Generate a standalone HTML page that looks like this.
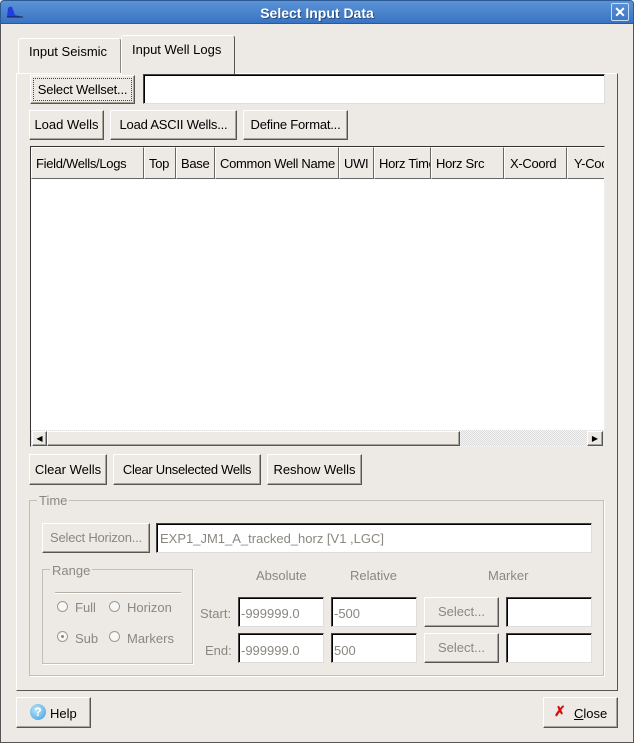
<!DOCTYPE html>
<html><head><meta charset="utf-8"><style>
*{box-sizing:border-box;margin:0;padding:0}
body{width:634px;height:743px;overflow:hidden;background:#edeae5;font-family:"Liberation Sans",sans-serif;font-size:13px;color:#000;position:relative}
.a{position:absolute}
.title{left:0;top:0;width:634px;height:24px;background:linear-gradient(#5a93d6,#3a74c2);border:1px solid #2d5a95;border-radius:4px 4px 0 0;color:#fff;font-weight:bold;font-size:14px;text-align:center;line-height:24px;text-shadow:1px 1px 0 #244d85}
.frame{left:0;top:24px;width:634px;height:719px;border:1px solid #555;border-top:none}
.btn{position:absolute;background:#edeae5;border:1px solid;border-color:#fff #555 #555 #fff;box-shadow:inset -1px -1px 0 #a9a49b;text-align:center;white-space:nowrap}
.inp{position:absolute;background:#fff;border:1px solid;border-color:#444 #ddd #ddd #444;box-shadow:inset 1px 1px 0 #000;white-space:nowrap;overflow:hidden}
.g{color:#8a8780}
.th{position:absolute;top:0;height:32px;line-height:32px;padding-left:4px;border:1px solid;border-color:#fff #666 #666 #fff;background:#edeae5;overflow:hidden;white-space:nowrap;letter-spacing:-0.3px}
.rad{position:absolute;width:11px;height:11px;border-radius:50%;border:1px solid #999;background:#f7f7f5}
.grp{position:absolute;border:1px solid #c3bfb7;box-shadow:1px 1px 0 #fff}
</style></head><body>
<div class="a title">Select Input Data</div>
<svg class="a" style="left:6px;top:5px" width="18" height="14"><path d="M1 12 L2 3 Q4 1 6 2 L9 10 L17 12 Z" fill="#1f3fe0"/><path d="M1 12H17" stroke="#222" stroke-width="1"/></svg>
<div class="a" style="left:611px;top:3px;width:18px;height:18px;border:1px solid #c9dbf0;border-radius:2px;color:#fff;font-weight:bold;text-align:center;line-height:16px;font-size:14px">✕</div>
<div class="a frame"></div>
<!-- tabs -->
<div class="a" style="left:18px;top:38px;width:103px;height:36px;border:1px solid;border-color:#fff #888 transparent #fff;border-radius:3px 3px 0 0;padding-left:10px;line-height:26px">Input Seismic</div>
<div class="a" style="left:16px;top:73px;width:602px;height:618px;border:1px solid;border-color:#fff #555 #555 #fff"></div>
<div class="a" style="left:121px;top:35px;width:114px;height:40px;border:1px solid;border-color:#fff #555 transparent #fff;background:#edeae5;border-radius:3px 3px 0 0;line-height:28px;padding-left:10px">Input Well Logs</div>
<div class="btn" style="left:30px;top:75px;width:105px;height:29px;line-height:27px;outline:1px dotted #444;outline-offset:-4px;letter-spacing:-0.2px">Select Wellset...</div>
<div class="inp" style="left:143px;top:74px;width:462px;height:30px"></div>
<div class="btn" style="left:29px;top:110px;width:75px;height:30px;line-height:28px">Load Wells</div>
<div class="btn" style="left:110px;top:110px;width:127px;height:30px;line-height:28px;letter-spacing:-0.2px">Load ASCII Wells...</div>
<div class="btn" style="left:243px;top:110px;width:105px;height:30px;line-height:28px;letter-spacing:-0.2px">Define Format...</div>
<!-- table -->
<div class="a" style="left:30px;top:146px;width:575px;height:301px;background:#fff;border:1px solid;border-color:#333 #eee #eee #333;overflow:hidden">
<div class="th" style="left:0;width:113px">Field/Wells/Logs</div>
<div class="th" style="left:113px;width:32px">Top</div>
<div class="th" style="left:145px;width:39px">Base</div>
<div class="th" style="left:184px;width:124px">Common Well Name</div>
<div class="th" style="left:308px;width:35px">UWI</div>
<div class="th" style="left:343px;width:57px">Horz Time</div>
<div class="th" style="left:400px;width:73px">Horz Src</div>
<div class="th" style="left:473px;width:63px;padding-left:5px">X-Coord</div>
<div class="th" style="left:536px;width:60px;padding-left:6px">Y-Coord</div>
<div class="a" style="left:0;top:283px;width:574px;height:17px;background:repeating-conic-gradient(#ddd 0 25%,#f4f4f4 0 50%) 0 0/2px 2px"></div>
<div class="btn" style="left:1px;top:284px;width:15px;height:15px;font-size:8px;line-height:13px">◀</div>
<div class="btn" style="left:16px;top:284px;width:413px;height:15px"></div>
<div class="btn" style="left:556px;top:284px;width:16px;height:15px;font-size:8px;line-height:13px">▶</div>
</div>
<div class="btn" style="left:29px;top:454px;width:78px;height:31px;line-height:29px">Clear Wells</div>
<div class="btn" style="left:113px;top:454px;width:148px;height:31px;line-height:29px;letter-spacing:-0.3px">Clear Unselected Wells</div>
<div class="btn" style="left:267px;top:454px;width:95px;height:31px;line-height:29px">Reshow Wells</div>
<!-- time -->
<div class="grp" style="left:29px;top:500px;width:575px;height:176px"></div>
<div class="a g" style="left:37px;top:493px;background:#edeae5;padding:0 2px">Time</div>
<div class="btn g" style="left:42px;top:523px;width:108px;height:30px;line-height:28px;letter-spacing:-0.2px">Select Horizon...</div>
<div class="inp g" style="left:156px;top:523px;width:436px;height:30px;line-height:30px;padding-left:3px">EXP1_JM1_A_tracked_horz [V1 ,LGC]</div>
<div class="grp" style="left:42px;top:569px;width:151px;height:95px"></div>
<div class="a g" style="left:50px;top:563px;background:#edeae5;padding:0 2px">Range</div>
<div class="a" style="left:55px;top:592px;width:126px;height:1px;background:#b5b1a9;box-shadow:0 1px 0 #fff"></div>
<div class="rad" style="left:57px;top:601px"></div><div class="a g" style="left:75px;top:600px">Full</div>
<div class="rad" style="left:109px;top:601px"></div><div class="a g" style="left:127px;top:600px">Horizon</div>
<div class="rad" style="left:57px;top:631px"><div style="width:3px;height:3px;background:#888;margin:3px;border-radius:50%"></div></div><div class="a g" style="left:75px;top:631px">Sub</div>
<div class="rad" style="left:109px;top:631px"></div><div class="a g" style="left:127px;top:631px">Markers</div>
<div class="a g" style="left:256px;top:568px">Absolute</div>
<div class="a g" style="left:350px;top:568px">Relative</div>
<div class="a g" style="left:488px;top:568px">Marker</div>
<div class="a g" style="left:200px;top:606px">Start:</div>
<div class="a g" style="left:205px;top:643px">End:</div>
<div class="inp g" style="left:238px;top:597px;width:86px;height:30px;line-height:32px;padding-left:2px">-999999.0</div>
<div class="inp g" style="left:331px;top:597px;width:86px;height:30px;line-height:32px;padding-left:2px">-500</div>
<div class="btn g" style="left:424px;top:597px;width:75px;height:30px;line-height:28px">Select...</div>
<div class="inp" style="left:506px;top:597px;width:86px;height:30px"></div>
<div class="inp g" style="left:238px;top:633px;width:86px;height:30px;line-height:34px;padding-left:2px">-999999.0</div>
<div class="inp g" style="left:331px;top:633px;width:86px;height:30px;line-height:34px;padding-left:2px">500</div>
<div class="btn g" style="left:424px;top:633px;width:75px;height:30px;line-height:28px">Select...</div>
<div class="inp" style="left:506px;top:633px;width:86px;height:30px"></div>
<!-- bottom -->
<div class="btn" style="left:16px;top:697px;width:75px;height:31px;line-height:31px;text-align:left;padding-left:33px">Help</div>
<div class="a" style="left:30px;top:704px;width:16px;height:16px;border-radius:50%;background:radial-gradient(circle at 40% 35%,#bfe6fb,#3a9ad8);color:#fff;font-weight:bold;font-size:12px;line-height:16px;text-align:center">?</div>
<div class="btn" style="left:543px;top:697px;width:75px;height:31px;line-height:31px;text-align:left;padding-left:30px"><u>C</u>lose</div>
<div class="a" style="left:554px;top:703px;color:#d01010;font-weight:bold;font-size:14px">✗</div>
</body></html>
